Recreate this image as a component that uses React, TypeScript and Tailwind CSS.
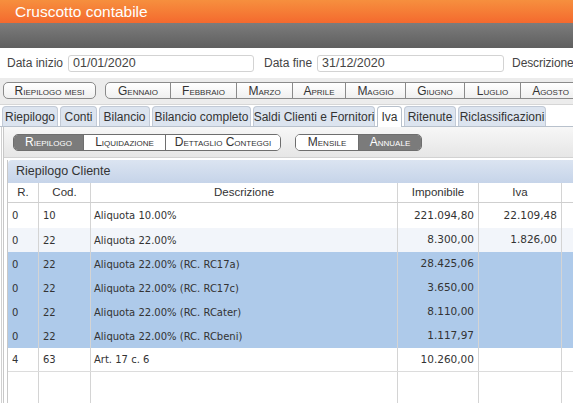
import React from "react";

const months = [
  { n: "Gennaio", w: 64 },
  { n: "Febbraio", w: 66 },
  { n: "Marzo", w: 56 },
  { n: "Aprile", w: 53 },
  { n: "Maggio", w: 60 },
  { n: "Giugno", w: 59 },
  { n: "Luglio", w: 56 },
  { n: "Agosto", w: 60 },
];

const tabs = [
  { n: "Riepilogo", w: 56 },
  { n: "Conti", w: 37 },
  { n: "Bilancio", w: 51 },
  { n: "Bilancio completo", w: 99 },
  { n: "Saldi Clienti e Fornitori", w: 122 },
  { n: "Iva", w: 25, active: true },
  { n: "Ritenute", w: 52 },
  { n: "Riclassificazioni", w: 88 },
];

const rows = [
  { r: "0", c: "10", d: "Aliquota 10.00%", i: "221.094,80", v: "22.109,48", bg: "bg-white h-[25px]" },
  { r: "0", c: "22", d: "Aliquota 22.00%", i: "8.300,00", v: "1.826,00", bg: "bg-[#f2f5fa] h-[24px]" },
  { r: "0", c: "22", d: "Aliquota 22.00% (RC. RC17a)", i: "28.425,06", v: "", bg: "bg-[#aecaea] h-[24px]" },
  { r: "0", c: "22", d: "Aliquota 22.00% (RC. RC17c)", i: "3.650,00", v: "", bg: "bg-[#aecaea] h-[24px]" },
  { r: "0", c: "22", d: "Aliquota 22.00% (RC. RCater)", i: "8.110,00", v: "", bg: "bg-[#aecaea] h-[24px]" },
  { r: "0", c: "22", d: "Aliquota 22.00% (RC. RCbeni)", i: "1.117,97", v: "", bg: "bg-[#aecaea] h-[24px]" },
  { r: "4", c: "63", d: "Art. 17 c. 6", i: "10.260,00", v: "", bg: "bg-white h-[24px] border-b border-[#dcdcdc]" },
];

const cols = "grid grid-cols-[31px_52px_307px_81px_83px_60px]";

export default function App() {
  return (
    <div className="w-[573px] h-[403px] overflow-hidden bg-white text-[#333] font-['Liberation_Sans',Arial,sans-serif]">
      {/* orange title */}
      <div className="h-[23px] bg-gradient-to-b from-[#f68f3e] to-[#f4692e] flex items-center pl-[15px]">
        <span className="text-white text-[15.5px] leading-none">Cruscotto contabile</span>
      </div>
      {/* gray toolbar */}
      <div className="h-[25px] bg-gradient-to-b from-[#7c7c7c] to-[#5f5f5f]" />
      {/* date row */}
      <div className="h-[30px] flex items-center whitespace-nowrap text-[12px] text-[#444]">
        <span className="ml-[7px] shrink-0">Data inizio</span>
        <div className="ml-[5px] w-[186px] shrink-0 h-[17px] border border-[#d3d3d3] rounded-[3px] flex items-center pl-[4px] text-[12.5px]">01/01/2020</div>
        <span className="ml-[10px] shrink-0">Data fine</span>
        <div className="ml-[5px] w-[187px] shrink-0 h-[17px] border border-[#d3d3d3] rounded-[3px] flex items-center pl-[4px] text-[12.5px]">31/12/2020</div>
        <span className="ml-[8px] shrink-0 tracking-[-0.1px]">Descrizione</span>
      </div>
      {/* months row */}
      <div className="h-[27px] bg-[#ececec] border-b border-[#d6d6d6] flex items-start pt-[4px] whitespace-nowrap text-[12px] [font-variant:small-caps] text-[#333]">
        <div className="ml-[3px] w-[93px] shrink-0 h-[17px] border border-[#8a8a8a] rounded-[5px] bg-gradient-to-b from-white to-[#f0f0f0] flex items-center justify-center">Riepilogo mesi</div>
        <div className="ml-[9px] h-[17px] flex border border-[#8a8a8a] rounded-l-[5px] bg-gradient-to-b from-white to-[#f0f0f0] shrink-0">
          {months.map((m, k) => (
            <div
              key={m.n}
              style={{ width: m.w }}
              className={"flex items-center justify-center shrink-0 " + (k > 0 ? "border-l border-[#8a8a8a]" : "")}
            >
              {m.n}
            </div>
          ))}
        </div>
      </div>
      {/* tabs */}
      <div className="h-[22px] flex items-end pl-[2px] gap-[2px] border-b border-[#b8c1cc] whitespace-nowrap text-[12px]">
        {tabs.map((t) => (
          <div
            key={t.n}
            style={{ width: t.w }}
            className={
              "flex items-center justify-center rounded-t-[4px] border border-b-0 shrink-0 " +
              (t.active ? "bg-white border-[#b8c1cc] h-[21px] -mb-px" : "h-[20px] bg-[#dce4ef] border-[#c2cad6]")
            }
          >
            {t.n}
          </div>
        ))}
      </div>
      {/* content panel */}
      <div className="ml-[1px] border-l border-[#d0d0d0] pl-[1px]">
        <div className="border-l border-[#c8c8c8] pl-[3px]">
          <div className="h-[31px] bg-gradient-to-b from-[#f7f7f7] to-[#e6e6e6] border-b border-[#d2d2d2] flex items-center whitespace-nowrap text-[12px] [font-variant:small-caps] -ml-[3px] pl-[9px]">
            <div className="h-[17px] flex border border-[#6e6e6e] rounded-[5px] overflow-hidden shrink-0">
              <div className="w-[69px] flex items-center justify-center bg-[#7b7b7b] text-white">Riepilogo</div>
              <div className="w-[82px] flex items-center justify-center bg-white border-l border-[#6e6e6e]">Liquidazione</div>
              <div className="w-[115px] flex items-center justify-center bg-white border-l border-[#6e6e6e]">Dettaglio Conteggi</div>
            </div>
            <div className="ml-[14px] h-[17px] flex border border-[#6e6e6e] rounded-[5px] overflow-hidden shrink-0">
              <div className="w-[62px] flex items-center justify-center bg-white">Mensile</div>
              <div className="w-[63px] flex items-center justify-center bg-[#7b7b7b] text-white border-l border-[#6e6e6e]">Annuale</div>
            </div>
          </div>
          <div className="mt-[2px] border-l border-[#c8c8c8]">
            <div className="h-[23px] rounded-tl-[4px] bg-gradient-to-b from-[#dbe4f1] to-[#c6d4e9] flex items-center pl-[8px] text-[12.5px] text-[#333]">
              Riepilogo Cliente
            </div>
            <div className={cols + " h-[20px] bg-white border-b border-[#cfcfcf] text-[11.5px] text-[#333]"}>
              {["R.", "Cod.", "Descrizione", "Imponibile", "Iva", ""].map((h, k) => (
                <div key={k} className={"flex items-center justify-center " + (k < 5 ? "border-r border-[#d4d4d4]" : "")}>
                  {h}
                </div>
              ))}
            </div>
            {rows.map((r, k) => (
              <div
                key={k}
                className={cols + " text-[10px] text-[#333] font-['DejaVu_Sans',Verdana,sans-serif] " + r.bg}
              >
                <div className="flex items-center pl-[4px] border-r border-[#d4d4d4]">{r.r}</div>
                <div className="flex items-center pl-[4px] border-r border-[#d4d4d4]">{r.c}</div>
                <div className="flex items-center pl-[3px] border-r border-[#d4d4d4]">{r.d}</div>
                <div className="flex items-center justify-end pr-[4px] border-r border-[#d4d4d4] text-[10.5px]">{r.i}</div>
                <div className="flex items-center justify-end pr-[4px] border-r border-[#d4d4d4] text-[10.5px]">{r.v}</div>
                <div />
              </div>
            ))}
            <div className={cols + " h-[40px] bg-white"}>
              <div className="border-r border-[#d4d4d4]" />
              <div className="border-r border-[#d4d4d4]" />
              <div className="border-r border-[#d4d4d4]" />
              <div className="border-r border-[#d4d4d4]" />
              <div className="border-r border-[#d4d4d4]" />
              <div />
            </div>
          </div>
        </div>
      </div>
    </div>
  );
}
